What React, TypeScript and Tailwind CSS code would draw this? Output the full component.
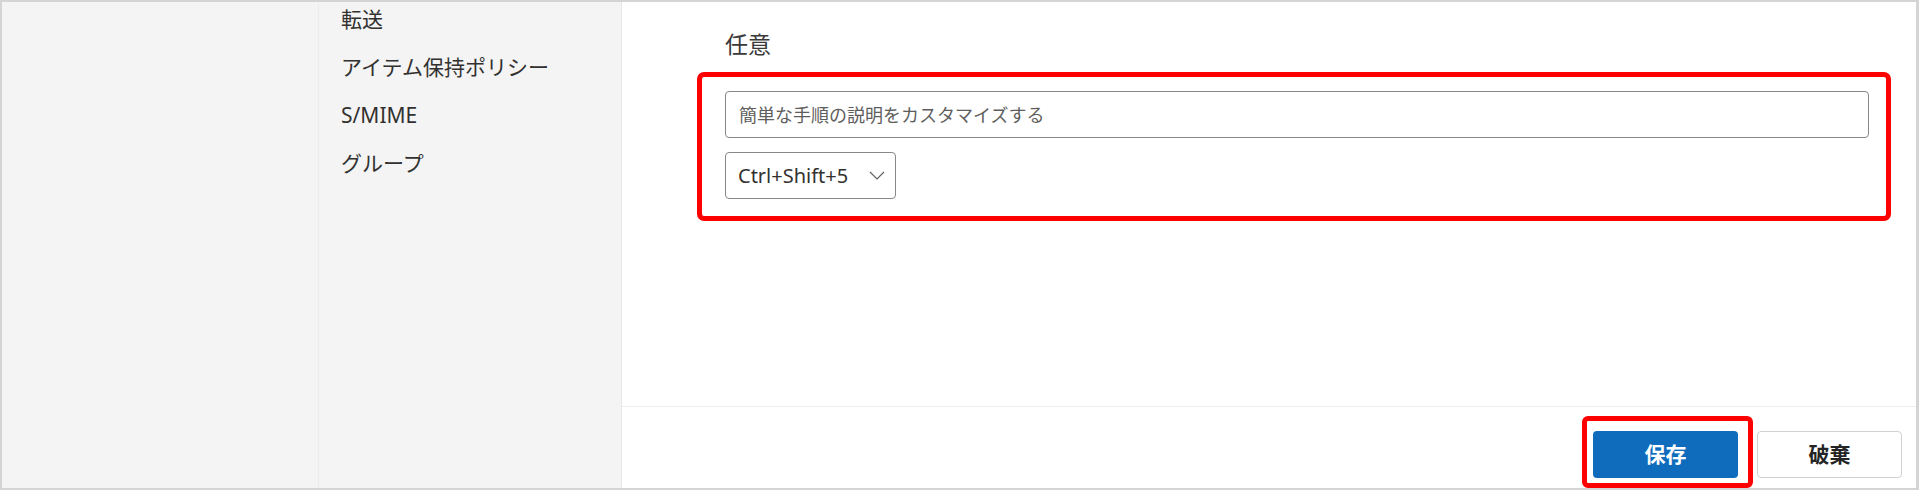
const navItems = ["転送", "アイテム保持ポリシー", "S/MIME", "グループ"];

function Chevron() {
  return (
    <svg width="16" height="9" viewBox="0 0 16 9" fill="none">
      <polyline points="1,1 8,8 15,1" stroke="#605e5c" strokeWidth="1.1" />
    </svg>
  );
}

export default function App() {
  return (
    <div className="flex h-[490px] w-full overflow-hidden border-t-2 border-l-2 border-r-[3px] border-b-2 border-[#d4d4d4] bg-white font-['Noto_Sans','Noto_Sans_CJK_JP',sans-serif] text-[#323130]">
      {/* Left navigation */}
      <aside className="flex w-[619px] shrink-0 overflow-hidden bg-[#f4f4f4]">
        <div className="w-[317px] shrink-0 border-r border-[#ececec]" />
        <nav className="-mt-[7px] flex flex-1 flex-col pl-[22px]">
          {navItems.map((item) => (
            <div key={item} className="flex h-[48px] items-center text-[21px] leading-none">
              {item}
            </div>
          ))}
        </nav>
      </aside>

      {/* Main pane */}
      <main className="flex min-w-0 flex-1 flex-col border-l border-[#e8e8e8]">
        <div className="flex-1 pt-[27px] pl-[75px] pr-[25px]">
          <div className="pl-[28px] text-[23px] leading-[30px] text-[#3b3a39]">任意</div>

          <div className="mt-[13px] flex flex-col gap-[14px] rounded-[7px] border-[5px] border-[#ff0000] pt-[14px] pl-[23px] pr-[17px] pb-[17px]">
            <input
              type="text"
              placeholder="簡単な手順の説明をカスタマイズする"
              className="h-[47px] w-full rounded-[4px] border border-[#8a8886] bg-white pl-[13px] text-[18px] text-[#323130] outline-none placeholder:text-[#605e5c]"
            />
            <button className="flex h-[47px] w-[171px] items-center rounded-[4px] border border-[#8a8886] bg-white pl-[12px] pr-[10px] text-[20px] text-[#323130]">
              <span className="flex-1 text-left">Ctrl+Shift+5</span>
              <Chevron />
            </button>
          </div>
        </div>

        <footer className="flex h-[82px] shrink-0 items-start justify-end gap-[4px] border-t border-[#eeeeee] pt-[9px] pr-[14px]">
          <div className="rounded-[6px] border-[5px] border-[#ff0000] pt-[10px] pl-[6px] pr-[10px] pb-[5px]">
            <button className="flex h-[47px] w-[145px] items-center justify-center rounded-[4px] bg-[#0f6cbd] text-[21px] font-bold text-white">
              保存
            </button>
          </div>
          <button className="mt-[15px] flex h-[47px] w-[145px] items-center justify-center rounded-[4px] border border-[#d1d1d1] bg-white text-[21px] font-bold text-[#242424]">
            破棄
          </button>
        </footer>
      </main>
    </div>
  );
}
